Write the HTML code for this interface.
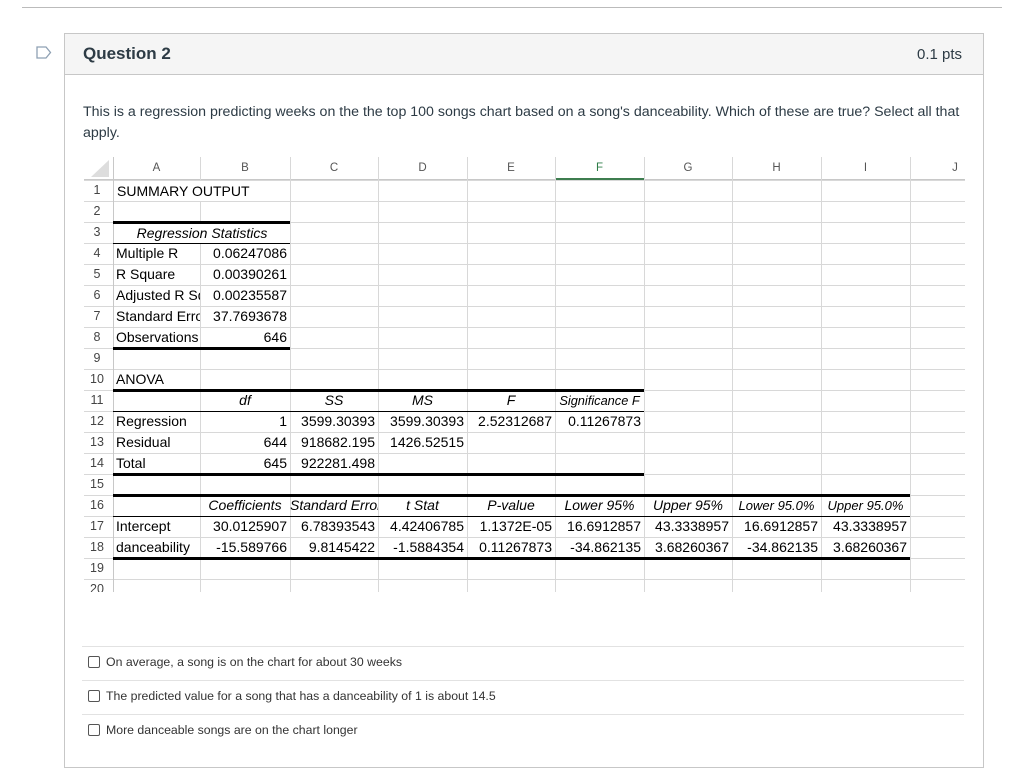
<!DOCTYPE html>
<html><head><meta charset="utf-8"><style>
body{margin:0;width:1024px;height:784px;background:#fff;position:relative;overflow:hidden;font-family:"Liberation Sans",sans-serif;}
.a{position:absolute}
.c{position:absolute;height:21px;line-height:21px;font-size:14px;color:#000;white-space:nowrap;overflow:hidden;padding:0 3px;box-sizing:border-box;}
.r{text-align:right}.m{text-align:center}.i{font-style:italic}
.n{position:absolute;left:84px;width:26px;text-align:center;height:21px;line-height:21px;font-size:12.5px;color:#444}
.h{position:absolute;top:157px;height:23px;line-height:23px;text-align:center;font-size:11.5px;color:#555}
.v{position:absolute;top:157px;width:1px;height:435px;background:#d8d8d8}
.tk{position:absolute;height:3px;background:#000}
.tn{position:absolute;height:1px;background:#000}
.cb{display:inline-block;width:10px;height:10px;border:1px solid #555;border-radius:2px;vertical-align:-2px;margin-right:6px}
.opt{position:absolute;left:88px;font-size:12.3px;color:#333}
.sep{position:absolute;left:82px;width:882px;height:1px;background:#e2e2e2}
</style></head><body>
<div class="a" style="left:22px;top:7px;width:980px;height:1px;background:#bbb"></div>
<svg class="a" style="left:36px;top:46px" width="16" height="14"><path d="M1 1 H10 L14.5 6.5 L10 12 H1 Z" fill="none" stroke="#8ea0b3" stroke-width="1.3"/></svg>
<div class="a" style="left:64px;top:33px;width:918px;height:733px;border:1px solid #c7c7c7"></div>
<div class="a" style="left:65px;top:34px;width:918px;height:40px;background:#f5f5f5;border-bottom:1px solid #c7c7c7"></div>
<div class="a" style="left:83px;top:44px;font-size:17px;font-weight:bold;color:#2d3b45">Question 2</div>
<div class="a" style="left:917px;top:46px;font-size:15px;color:#2d3b45">0.1 pts</div>
<div class="a" style="left:83px;top:102px;width:878px;font-size:14.2px;line-height:21px;color:#2d3b45">This is a regression predicting weeks on the the top 100 songs chart based on a song's danceability. Which of these are true? Select all that apply.</div>

<!-- grid -->
<div class="a" style="left:84px;top:180px;width:881px;height:412px;background:repeating-linear-gradient(to bottom,#d8d8d8 0 1px,transparent 1px 21px)"></div>
<div class="a" style="left:84px;top:179px;width:881px;height:1px;background:#c8c8c8"></div>
<div class="v" style="left:113px;background:#c8c8c8"></div>
<div class="v" style="left:200px"></div><div class="v" style="left:290px"></div><div class="v" style="left:378px"></div><div class="v" style="left:467px"></div><div class="v" style="left:555px"></div><div class="v" style="left:644px"></div><div class="v" style="left:732px"></div><div class="v" style="left:821px"></div><div class="v" style="left:910px"></div>
<svg class="a" style="left:87px;top:158px" width="24" height="20"><path d="M22 2 V19 H4 Z" fill="#ddd"/></svg>
<div class="h" style="left:113px;width:87px">A</div><div class="h" style="left:200px;width:90px">B</div><div class="h" style="left:290px;width:88px">C</div><div class="h" style="left:378px;width:89px">D</div><div class="h" style="left:467px;width:88px">E</div><div class="h" style="left:555px;width:89px;color:#2e7d48">F</div><div class="h" style="left:644px;width:88px">G</div><div class="h" style="left:732px;width:89px">H</div><div class="h" style="left:821px;width:89px">I</div><div class="h" style="left:910px;width:90px">J</div>
<div class="a" style="left:556px;top:178px;width:88px;height:2px;background:#3d7d4f"></div>

<div class="n" style="top:180px">1</div><div class="n" style="top:201px">2</div><div class="n" style="top:222px">3</div><div class="n" style="top:243px">4</div><div class="n" style="top:264px">5</div><div class="n" style="top:285px">6</div><div class="n" style="top:306px">7</div><div class="n" style="top:327px">8</div><div class="n" style="top:348px">9</div><div class="n" style="top:369px">10</div><div class="n" style="top:390px">11</div><div class="n" style="top:411px">12</div><div class="n" style="top:432px">13</div><div class="n" style="top:453px">14</div><div class="n" style="top:474px">15</div><div class="n" style="top:495px">16</div><div class="n" style="top:516px">17</div><div class="n" style="top:537px">18</div><div class="n" style="top:558px">19</div><div class="n" style="top:579px;height:13px;overflow:hidden">20</div>

<div class="c" style="left:114px;top:181px;width:176px;height:20px;background:#fff">SUMMARY OUTPUT</div>
<div class="c i m" style="left:114px;top:223px;width:176px;height:20px;background:#fff">Regression Statistics</div>
<div class="c" style="left:113px;top:243px;width:87px">Multiple R</div><div class="c r" style="left:200px;top:243px;width:90px">0.06247086</div>
<div class="c" style="left:113px;top:264px;width:87px">R Square</div><div class="c r" style="left:200px;top:264px;width:90px">0.00390261</div>
<div class="c" style="left:113px;top:285px;width:87px">Adjusted R Square</div><div class="c r" style="left:200px;top:285px;width:90px">0.00235587</div>
<div class="c" style="left:113px;top:306px;width:87px">Standard Error</div><div class="c r" style="left:200px;top:306px;width:90px">37.7693678</div>
<div class="c" style="left:113px;top:327px;width:87px">Observations</div><div class="c r" style="left:200px;top:327px;width:90px">646</div>
<div class="c" style="left:113px;top:369px;width:87px">ANOVA</div>

<div class="c i m" style="left:200px;top:390px;width:90px">df</div><div class="c i m" style="left:290px;top:390px;width:88px">SS</div><div class="c i m" style="left:378px;top:390px;width:89px">MS</div><div class="c i m" style="left:467px;top:390px;width:88px">F</div><div class="c i m" style="left:555px;top:390px;width:89px;padding:0;font-size:12.8px">Significance F</div>
<div class="c" style="left:113px;top:411px;width:87px">Regression</div><div class="c r" style="left:200px;top:411px;width:90px">1</div><div class="c r" style="left:290px;top:411px;width:88px">3599.30393</div><div class="c r" style="left:378px;top:411px;width:89px">3599.30393</div><div class="c r" style="left:467px;top:411px;width:88px">2.52312687</div><div class="c r" style="left:555px;top:411px;width:89px">0.11267873</div>
<div class="c" style="left:113px;top:432px;width:87px">Residual</div><div class="c r" style="left:200px;top:432px;width:90px">644</div><div class="c r" style="left:290px;top:432px;width:88px">918682.195</div><div class="c r" style="left:378px;top:432px;width:89px">1426.52515</div>
<div class="c" style="left:113px;top:453px;width:87px">Total</div><div class="c r" style="left:200px;top:453px;width:90px">645</div><div class="c r" style="left:290px;top:453px;width:88px">922281.498</div>

<div class="c i m" style="left:200px;top:495px;width:90px;padding:0">Coefficients</div><div class="c i m" style="left:290px;top:495px;width:88px;padding:0">Standard Error</div><div class="c i m" style="left:378px;top:495px;width:89px">t Stat</div><div class="c i m" style="left:467px;top:495px;width:88px">P-value</div><div class="c i m" style="left:555px;top:495px;width:89px">Lower 95%</div><div class="c i m" style="left:644px;top:495px;width:88px">Upper 95%</div><div class="c i m" style="left:732px;top:495px;width:89px;padding:0;font-size:13px">Lower 95.0%</div><div class="c i m" style="left:821px;top:495px;width:89px;padding:0;font-size:13px">Upper 95.0%</div>
<div class="c" style="left:113px;top:516px;width:87px">Intercept</div><div class="c r" style="left:200px;top:516px;width:90px">30.0125907</div><div class="c r" style="left:290px;top:516px;width:88px">6.78393543</div><div class="c r" style="left:378px;top:516px;width:89px">4.42406785</div><div class="c r" style="left:467px;top:516px;width:88px">1.1372E-05</div><div class="c r" style="left:555px;top:516px;width:89px">16.6912857</div><div class="c r" style="left:644px;top:516px;width:88px">43.3338957</div><div class="c r" style="left:732px;top:516px;width:89px">16.6912857</div><div class="c r" style="left:821px;top:516px;width:89px">43.3338957</div>
<div class="c" style="left:113px;top:537px;width:87px">danceability</div><div class="c r" style="left:200px;top:537px;width:90px">-15.589766</div><div class="c r" style="left:290px;top:537px;width:88px">9.8145422</div><div class="c r" style="left:378px;top:537px;width:89px">-1.5884354</div><div class="c r" style="left:467px;top:537px;width:88px">0.11267873</div><div class="c r" style="left:555px;top:537px;width:89px">-34.862135</div><div class="c r" style="left:644px;top:537px;width:88px">3.68260367</div><div class="c r" style="left:732px;top:537px;width:89px">-34.862135</div><div class="c r" style="left:821px;top:537px;width:89px">3.68260367</div>

<div class="tk" style="left:113px;top:221px;width:177px"></div><div class="tn" style="left:113px;top:243px;width:177px"></div><div class="tk" style="left:113px;top:347px;width:177px"></div>
<div class="tk" style="left:113px;top:389px;width:531px"></div><div class="tn" style="left:113px;top:411px;width:531px"></div><div class="tk" style="left:113px;top:473px;width:531px"></div>
<div class="tk" style="left:113px;top:494px;width:797px"></div><div class="tn" style="left:113px;top:516px;width:797px"></div><div class="tk" style="left:113px;top:557px;width:797px"></div>

<div class="sep" style="top:646px"></div>
<div class="opt" style="top:655px"><span class="cb"></span>On average, a song is on the chart for about 30 weeks</div>
<div class="sep" style="top:680px"></div>
<div class="opt" style="top:689px"><span class="cb"></span>The predicted value for a song that has a danceability of 1 is about 14.5</div>
<div class="sep" style="top:714px"></div>
<div class="opt" style="top:723px"><span class="cb"></span>More danceable songs are on the chart longer</div>
</body></html>
